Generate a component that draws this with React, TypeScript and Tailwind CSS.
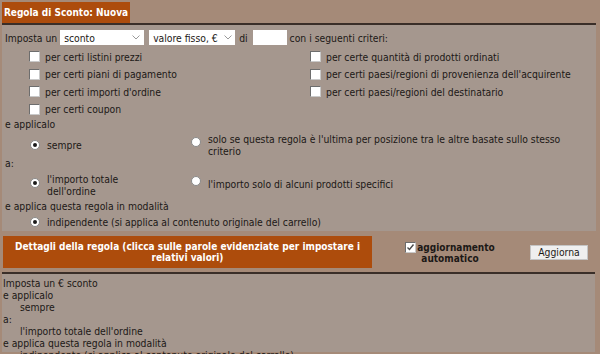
import React from "react";

const Check = ({ checked = false }: { checked?: boolean }) => (
  <span className="inline-flex w-[11px] h-[11px] shrink-0 items-center justify-center bg-white border border-t-[#6d6d6d] border-l-[#6d6d6d] border-r-[#c9c9c9] border-b-[#c9c9c9]">
    {checked && (
      <svg width="9" height="9" viewBox="0 0 9 9">
        <path d="M1.5 4.5 L3.5 6.5 L7.5 1.5" fill="none" stroke="#4a4a4a" strokeWidth="1.4" />
      </svg>
    )}
  </span>
);

const Radio = ({ checked = false }: { checked?: boolean }) => (
  <span className="inline-flex w-[10px] h-[10px] shrink-0 items-center justify-center rounded-full bg-white border border-[#8a8a8a]">
    {checked && <span className="w-[4px] h-[4px] rounded-full bg-[#1a1a1a]" />}
  </span>
);

const Chevron = () => (
  <svg width="8" height="5" viewBox="0 0 8 5" className="shrink-0">
    <path d="M0.5 0.5 L4 4 L7.5 0.5" fill="none" stroke="#9a9a9a" strokeWidth="1" />
  </svg>
);

const CritRow = ({ label }: { label: string }) => (
  <div className="flex items-center h-[17.5px] gap-[5px]">
    <Check />
    <span>{label}</span>
  </div>
);

export default function App() {
  return (
    <div className="w-[600px] h-[354px] overflow-hidden bg-[#a58a78] text-[#1c1816] text-[10.3px] leading-[12px] font-['DejaVu_Sans_Condensed','DejaVu_Sans',sans-serif]">
      {/* Tab */}
      <div className="pl-[2px] pt-[2px] h-[23px]">
        <div className="w-[128px] h-[21px] bg-[#ad4c0c] text-white font-bold text-[10px] flex items-center justify-center">
          Regola di Sconto: Nuova
        </div>
      </div>

      {/* Panel 1 */}
      <div className="ml-[2px] w-[594px] h-[208px] border-t-2 border-[#3a2e28] bg-[#a5978e]">
        {/* Row 1 */}
        <div className="flex items-center h-[23px] pt-[2px] pl-[3px]">
          <span>Imposta un</span>
          <div className="ml-[3px] w-[84px] h-[15px] bg-white flex items-center justify-between pl-[4px] pr-[4px]">
            <span>sconto</span>
            <Chevron />
          </div>
          <div className="ml-[5px] w-[86px] h-[15px] bg-white flex items-center justify-between pl-[4px] pr-[3px]">
            <span>valore fisso, €</span>
            <Chevron />
          </div>
          <span className="ml-[4px]">di</span>
          <div className="ml-[5px] w-[34px] h-[15px] bg-white" />
          <span className="ml-[3px]">con i seguenti criteri:</span>
        </div>

        {/* Criteria */}
        <div className="grid grid-cols-[281px_1fr] pl-[27px]">
          <div className="flex flex-col">
            <CritRow label="per certi listini prezzi" />
            <CritRow label="per certi piani di pagamento" />
            <CritRow label="per certi importi d'ordine" />
            <CritRow label="per certi coupon" />
          </div>
          <div className="flex flex-col">
            <CritRow label="per certe quantità di prodotti ordinati" />
            <CritRow label="per certi paesi/regioni di provenienza dell'acquirente" />
            <CritRow label="per certi paesi/regioni del destinatario" />
          </div>
        </div>

        <div className="pl-[3px] h-[12px]">e applicalo</div>

        {/* Radio row 1 */}
        <div className="grid grid-cols-[161px_1fr] pl-[28px] mt-[3px] h-[24px]">
          <div className="flex items-start gap-[7px]">
            <span className="mt-[4px]"><Radio checked /></span>
            <span className="mt-[6px]">sempre</span>
          </div>
          <div className="flex items-start gap-[7px]">
            <span className="mt-[4px]"><Radio /></span>
            <span className="w-[375px]">
              solo se questa regola è l'ultima per posizione tra le altre basate sullo stesso criterio
            </span>
          </div>
        </div>

        <div className="pl-[3px] h-[12px] mb-[4px]">a:</div>

        {/* Radio row 2 */}
        <div className="grid grid-cols-[161px_1fr] pl-[28px] h-[24px] leading-[11.5px]">
          <div className="flex items-start gap-[7px]">
            <span className="mt-[3px]"><Radio checked /></span>
            <span className="mt-[1px]">
              l'importo totale
              <br />
              dell'ordine
            </span>
          </div>
          <div className="flex items-start gap-[7px]">
            <span className="mt-[3px]"><Radio /></span>
            <span className="mt-[6px]">l'importo solo di alcuni prodotti specifici</span>
          </div>
        </div>

        <div className="pl-[3px] mt-[3px] h-[12px]">e applica questa regola in modalità</div>

        <div className="flex items-center gap-[7px] pl-[28px] mt-[4px] h-[12px]">
          <Radio checked />
          <span>indipendente (si applica al contenuto originale del carrello)</span>
        </div>
      </div>

      {/* Details header */}
      <div className="flex items-center mt-[5px] h-[32px]">
        <div className="ml-[3px] w-[369px] h-[32px] bg-[#ad4c0c] text-white font-bold text-[10px] text-center flex items-center justify-center leading-[11px]">
          Dettagli della regola (clicca sulle parole evidenziate per impostare i
          <br />
          relativi valori)
        </div>
        <div className="ml-[26px] w-[104px] text-center font-bold text-[10px] leading-[11px] pt-[1px] whitespace-nowrap">
          <span className="inline-flex align-[-1px] mr-[1px]"><Check checked /></span>
          aggiornamento
          <br />
          automatico
        </div>
        <button className="ml-[28px] w-[58px] h-[15px] bg-[#efefef] border border-[#c5c5c5] text-[#1c1816] flex items-center justify-center">
          Aggiorna
        </button>
      </div>

      {/* Panel 2 */}
      <div className="mt-[4px] ml-[2px] w-[593px] h-[80px] border-t-2 border-[#3a2e28] bg-[#a5978e] pl-[1px] pt-[3px]">
        <div>Imposta un € sconto</div>
        <div>e applicalo</div>
        <div className="pl-[17px]">sempre</div>
        <div>a:</div>
        <div className="pl-[17px]">l'importo totale dell'ordine</div>
        <div>e applica questa regola in modalità</div>
        <div className="pl-[17px]">indipendente (si applica al contenuto originale del carrello)</div>
      </div>
    </div>
  );
}
